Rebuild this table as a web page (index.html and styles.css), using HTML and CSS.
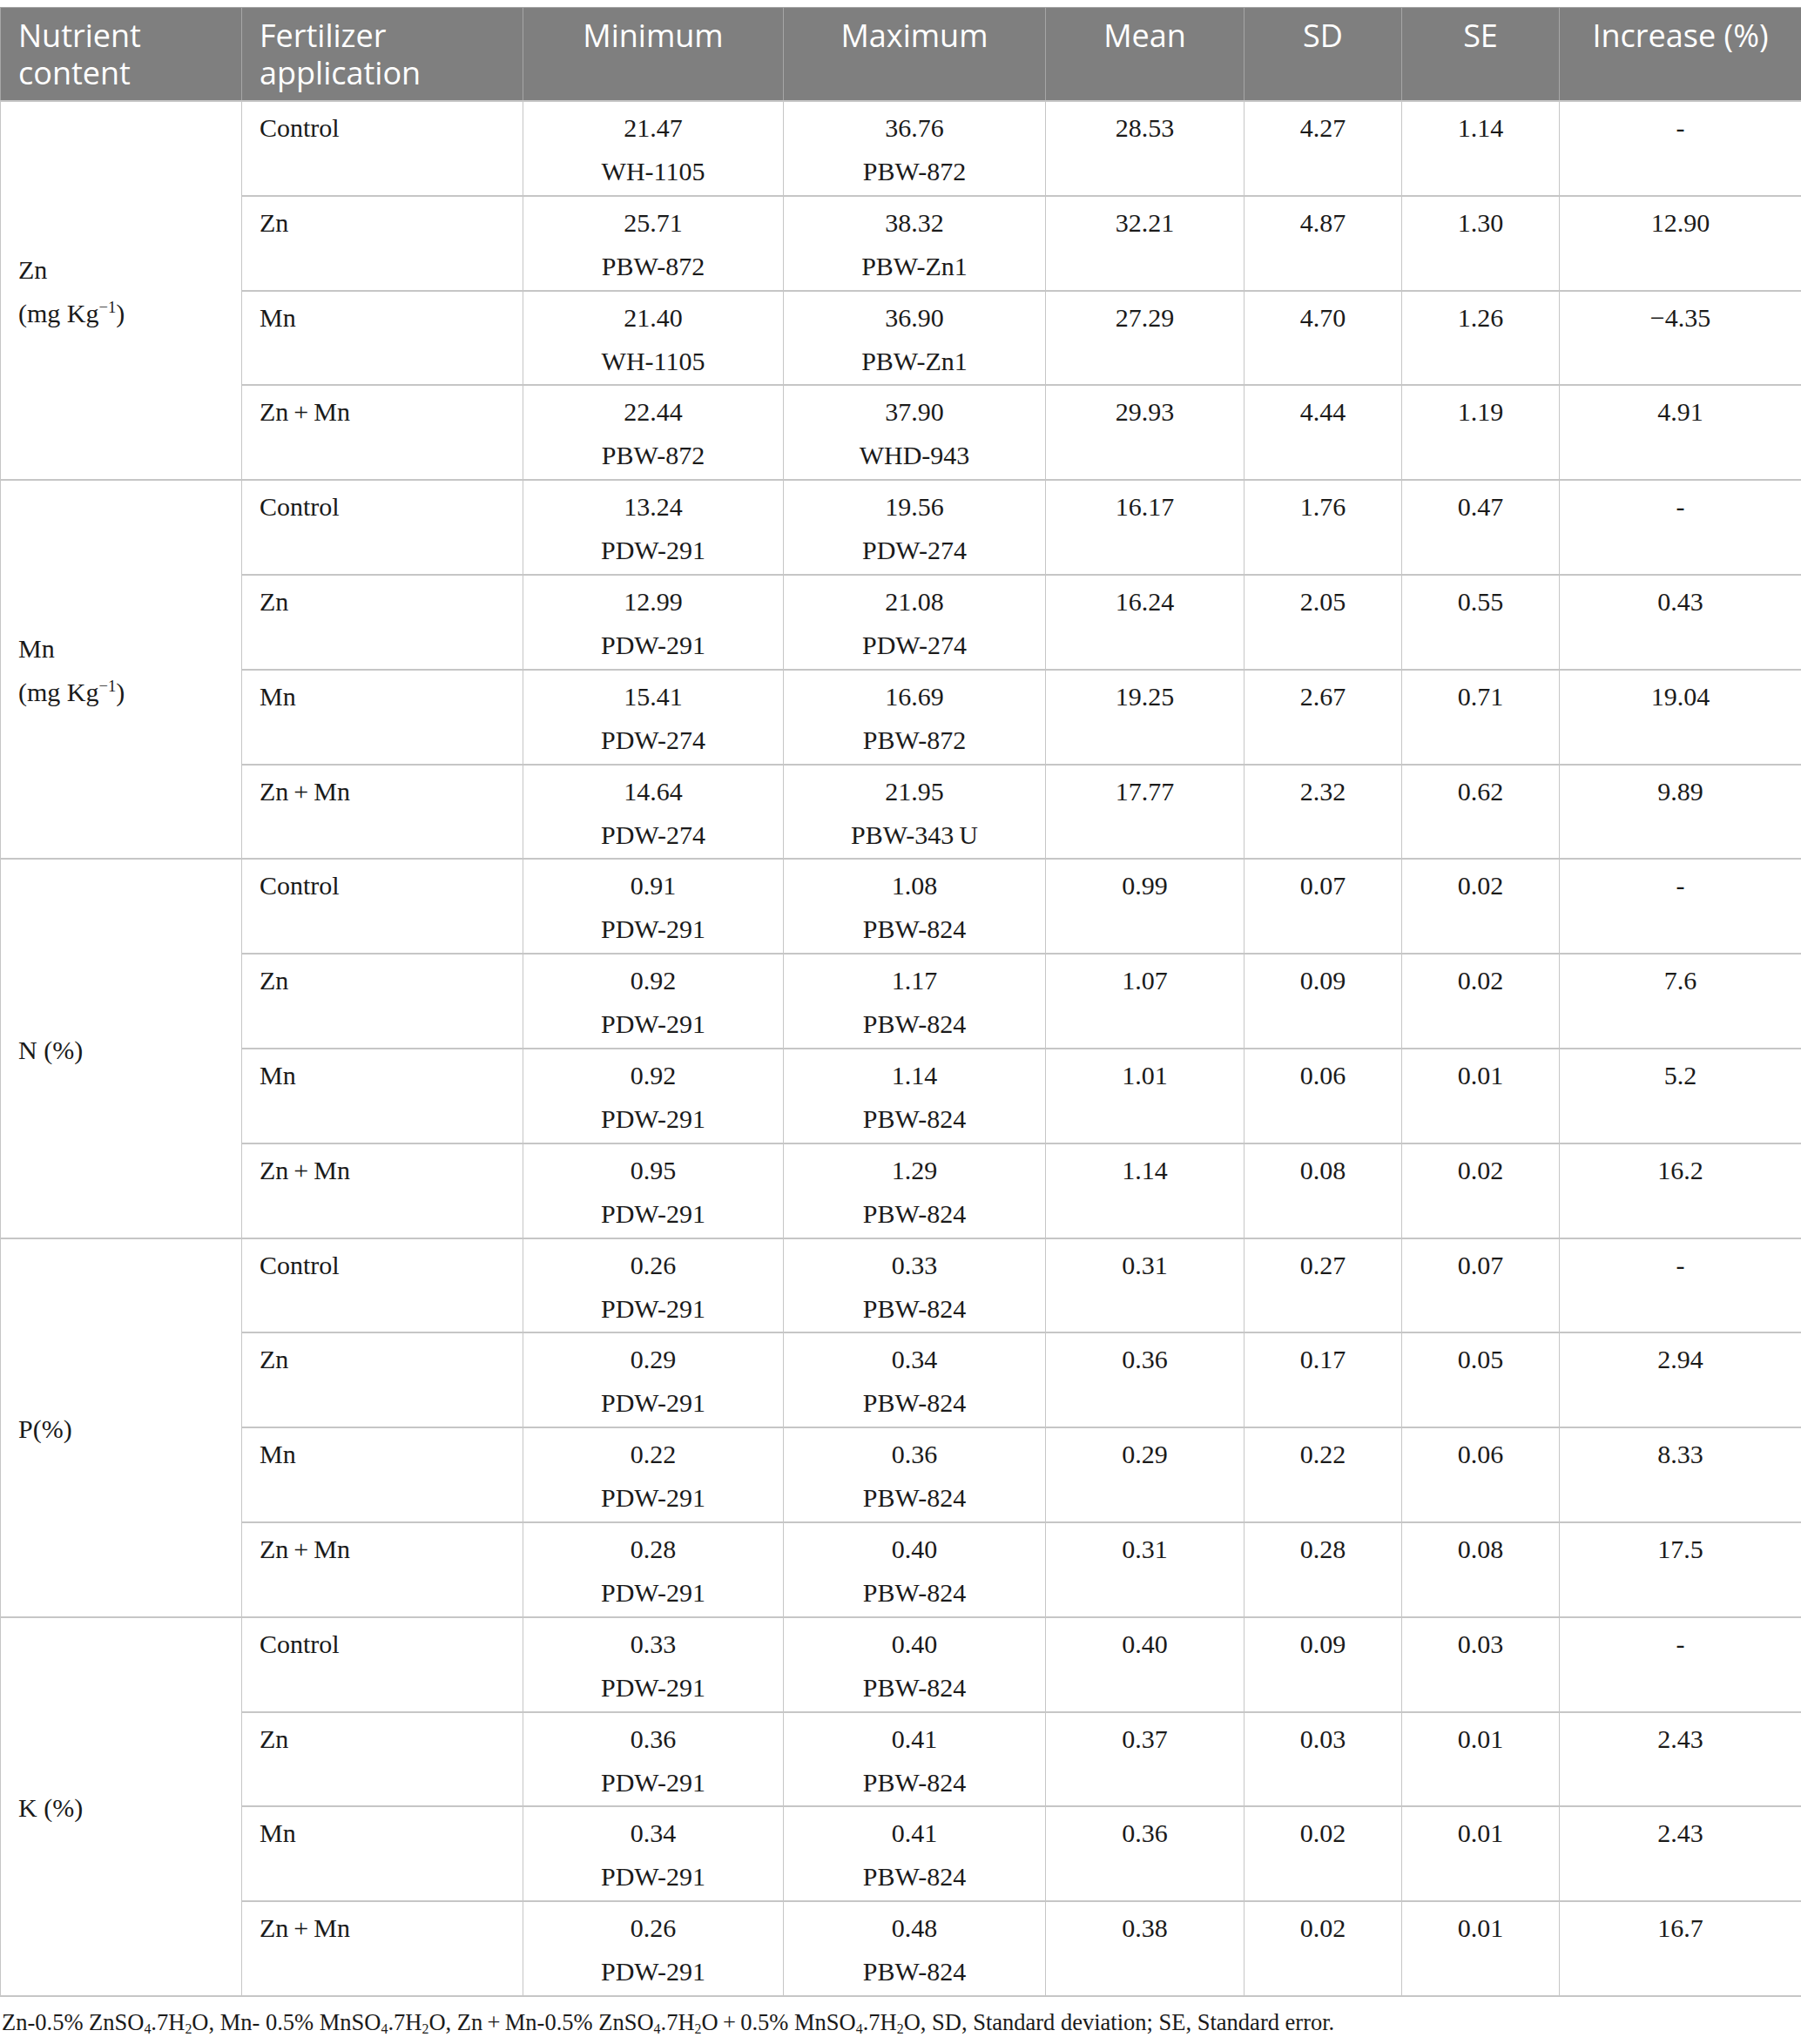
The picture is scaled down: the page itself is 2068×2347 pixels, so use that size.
FILE: index.html
```html
<!DOCTYPE html>
<html lang="en">
<head>
<meta charset="utf-8">
<title>Nutrient content table</title>
<link rel="stylesheet" href="styles.css">
</head>
<body>
<div class="page">
<table class="data">
<colgroup>
<col class="c1"><col class="c2"><col class="c3"><col class="c4"><col class="c5"><col class="c6"><col class="c7"><col class="c8">
</colgroup>
<thead>
<tr>
<th class="left">Nutrient content</th>
<th class="left">Fertilizer application</th>
<th>Minimum</th>
<th>Maximum</th>
<th>Mean</th>
<th>SD</th>
<th>SE</th>
<th>Increase (%)</th>
</tr>
</thead>
<tbody>
<tr><td class="nut" rowspan="4">Zn<br>(mg Kg<sup>−1</sup>)</td><td class="left">Control</td><td>21.47<br>WH-1105</td><td>36.76<br>PBW-872</td><td>28.53</td><td>4.27</td><td>1.14</td><td>-</td></tr>
<tr><td class="left">Zn</td><td>25.71<br>PBW-872</td><td>38.32<br>PBW-Zn1</td><td>32.21</td><td>4.87</td><td>1.30</td><td>12.90</td></tr>
<tr><td class="left">Mn</td><td>21.40<br>WH-1105</td><td>36.90<br>PBW-Zn1</td><td>27.29</td><td>4.70</td><td>1.26</td><td>−4.35</td></tr>
<tr><td class="left">Zn&thinsp;+&thinsp;Mn</td><td>22.44<br>PBW-872</td><td>37.90<br>WHD-943</td><td>29.93</td><td>4.44</td><td>1.19</td><td>4.91</td></tr>

<tr><td class="nut" rowspan="4">Mn<br>(mg Kg<sup>−1</sup>)</td><td class="left">Control</td><td>13.24<br>PDW-291</td><td>19.56<br>PDW-274</td><td>16.17</td><td>1.76</td><td>0.47</td><td>-</td></tr>
<tr><td class="left">Zn</td><td>12.99<br>PDW-291</td><td>21.08<br>PDW-274</td><td>16.24</td><td>2.05</td><td>0.55</td><td>0.43</td></tr>
<tr><td class="left">Mn</td><td>15.41<br>PDW-274</td><td>16.69<br>PBW-872</td><td>19.25</td><td>2.67</td><td>0.71</td><td>19.04</td></tr>
<tr><td class="left">Zn&thinsp;+&thinsp;Mn</td><td>14.64<br>PDW-274</td><td>21.95<br>PBW-343&thinsp;U</td><td>17.77</td><td>2.32</td><td>0.62</td><td>9.89</td></tr>

<tr><td class="nut" rowspan="4">N (%)</td><td class="left">Control</td><td>0.91<br>PDW-291</td><td>1.08<br>PBW-824</td><td>0.99</td><td>0.07</td><td>0.02</td><td>-</td></tr>
<tr><td class="left">Zn</td><td>0.92<br>PDW-291</td><td>1.17<br>PBW-824</td><td>1.07</td><td>0.09</td><td>0.02</td><td>7.6</td></tr>
<tr><td class="left">Mn</td><td>0.92<br>PDW-291</td><td>1.14<br>PBW-824</td><td>1.01</td><td>0.06</td><td>0.01</td><td>5.2</td></tr>
<tr><td class="left">Zn&thinsp;+&thinsp;Mn</td><td>0.95<br>PDW-291</td><td>1.29<br>PBW-824</td><td>1.14</td><td>0.08</td><td>0.02</td><td>16.2</td></tr>

<tr><td class="nut" rowspan="4">P(%)</td><td class="left">Control</td><td>0.26<br>PDW-291</td><td>0.33<br>PBW-824</td><td>0.31</td><td>0.27</td><td>0.07</td><td>-</td></tr>
<tr><td class="left">Zn</td><td>0.29<br>PDW-291</td><td>0.34<br>PBW-824</td><td>0.36</td><td>0.17</td><td>0.05</td><td>2.94</td></tr>
<tr><td class="left">Mn</td><td>0.22<br>PDW-291</td><td>0.36<br>PBW-824</td><td>0.29</td><td>0.22</td><td>0.06</td><td>8.33</td></tr>
<tr><td class="left">Zn&thinsp;+&thinsp;Mn</td><td>0.28<br>PDW-291</td><td>0.40<br>PBW-824</td><td>0.31</td><td>0.28</td><td>0.08</td><td>17.5</td></tr>

<tr><td class="nut" rowspan="4">K (%)</td><td class="left">Control</td><td>0.33<br>PDW-291</td><td>0.40<br>PBW-824</td><td>0.40</td><td>0.09</td><td>0.03</td><td>-</td></tr>
<tr><td class="left">Zn</td><td>0.36<br>PDW-291</td><td>0.41<br>PBW-824</td><td>0.37</td><td>0.03</td><td>0.01</td><td>2.43</td></tr>
<tr><td class="left">Mn</td><td>0.34<br>PDW-291</td><td>0.41<br>PBW-824</td><td>0.36</td><td>0.02</td><td>0.01</td><td>2.43</td></tr>
<tr><td class="left">Zn&thinsp;+&thinsp;Mn</td><td>0.26<br>PDW-291</td><td>0.48<br>PBW-824</td><td>0.38</td><td>0.02</td><td>0.01</td><td>16.7</td></tr>
</tbody>
</table>
<p class="note">Zn-0.5% ZnSO<sub>4</sub>.7H<sub>2</sub>O, Mn- 0.5% MnSO<sub>4</sub>.7H<sub>2</sub>O, Zn&thinsp;+&thinsp;Mn-0.5% ZnSO<sub>4</sub>.7H<sub>2</sub>O&thinsp;+&thinsp;0.5% MnSO<sub>4</sub>.7H<sub>2</sub>O, SD, Standard deviation; SE, Standard error.</p>
</div>
</body>
</html>
```
FILE: styles.css
```css
html, body {
  margin: 0;
  padding: 0;
  background: #ffffff;
}
.page {
  padding-top: 8px;
  width: 2068px;
}
.data {
  width: 2068px;
  table-layout: fixed;
  border-collapse: collapse;
  font-family: "Liberation Serif", "Times New Roman", serif;
  font-size: 30px;
  color: #1a1a1a;
}
.c1 { width: 277px; }
.c2 { width: 323px; }
.c3 { width: 299px; }
.c4 { width: 301px; }
.c5 { width: 228px; }
.c6 { width: 181px; }
.c7 { width: 181px; }
.c8 { width: 278px; }

.data th {
  background: #7f7f7f;
  color: #ffffff;
  font-family: "Open Sans", "Noto Sans", sans-serif;
  font-weight: 400;
  font-size: 36px;
  line-height: 43px;
  text-align: center;
  vertical-align: top;
  padding: 10px 20px 10px 20px;
  border: 1px solid #a6a6a6;
  height: 86px;
}
.data th.left {
  text-align: left;
}
.data td {
  text-align: center;
  vertical-align: top;
  line-height: 50px;
  padding: 5px 20px 1.8px 20px;
  border-left: 1px solid #c6c6c6;
  border-right: 1px solid #c6c6c6;
  border-top: 2px solid #c6c6c6;
  border-bottom: 2px solid #c6c6c6;
}
.data td.left {
  text-align: left;
}
.data td.nut {
  text-align: left;
  vertical-align: middle;
}
.data sup {
  font-size: 0.62em;
  line-height: 0;
  vertical-align: 0.6em;
}
.note {
  margin: 14px 0 0 2px;
  font-family: "Liberation Serif", "Times New Roman", serif;
  font-size: 26.5px;
  line-height: 30px;
  color: #1a1a1a;
}
.note sub {
  font-size: 0.6em;
  line-height: 0;
  vertical-align: -0.25em;
}
```
